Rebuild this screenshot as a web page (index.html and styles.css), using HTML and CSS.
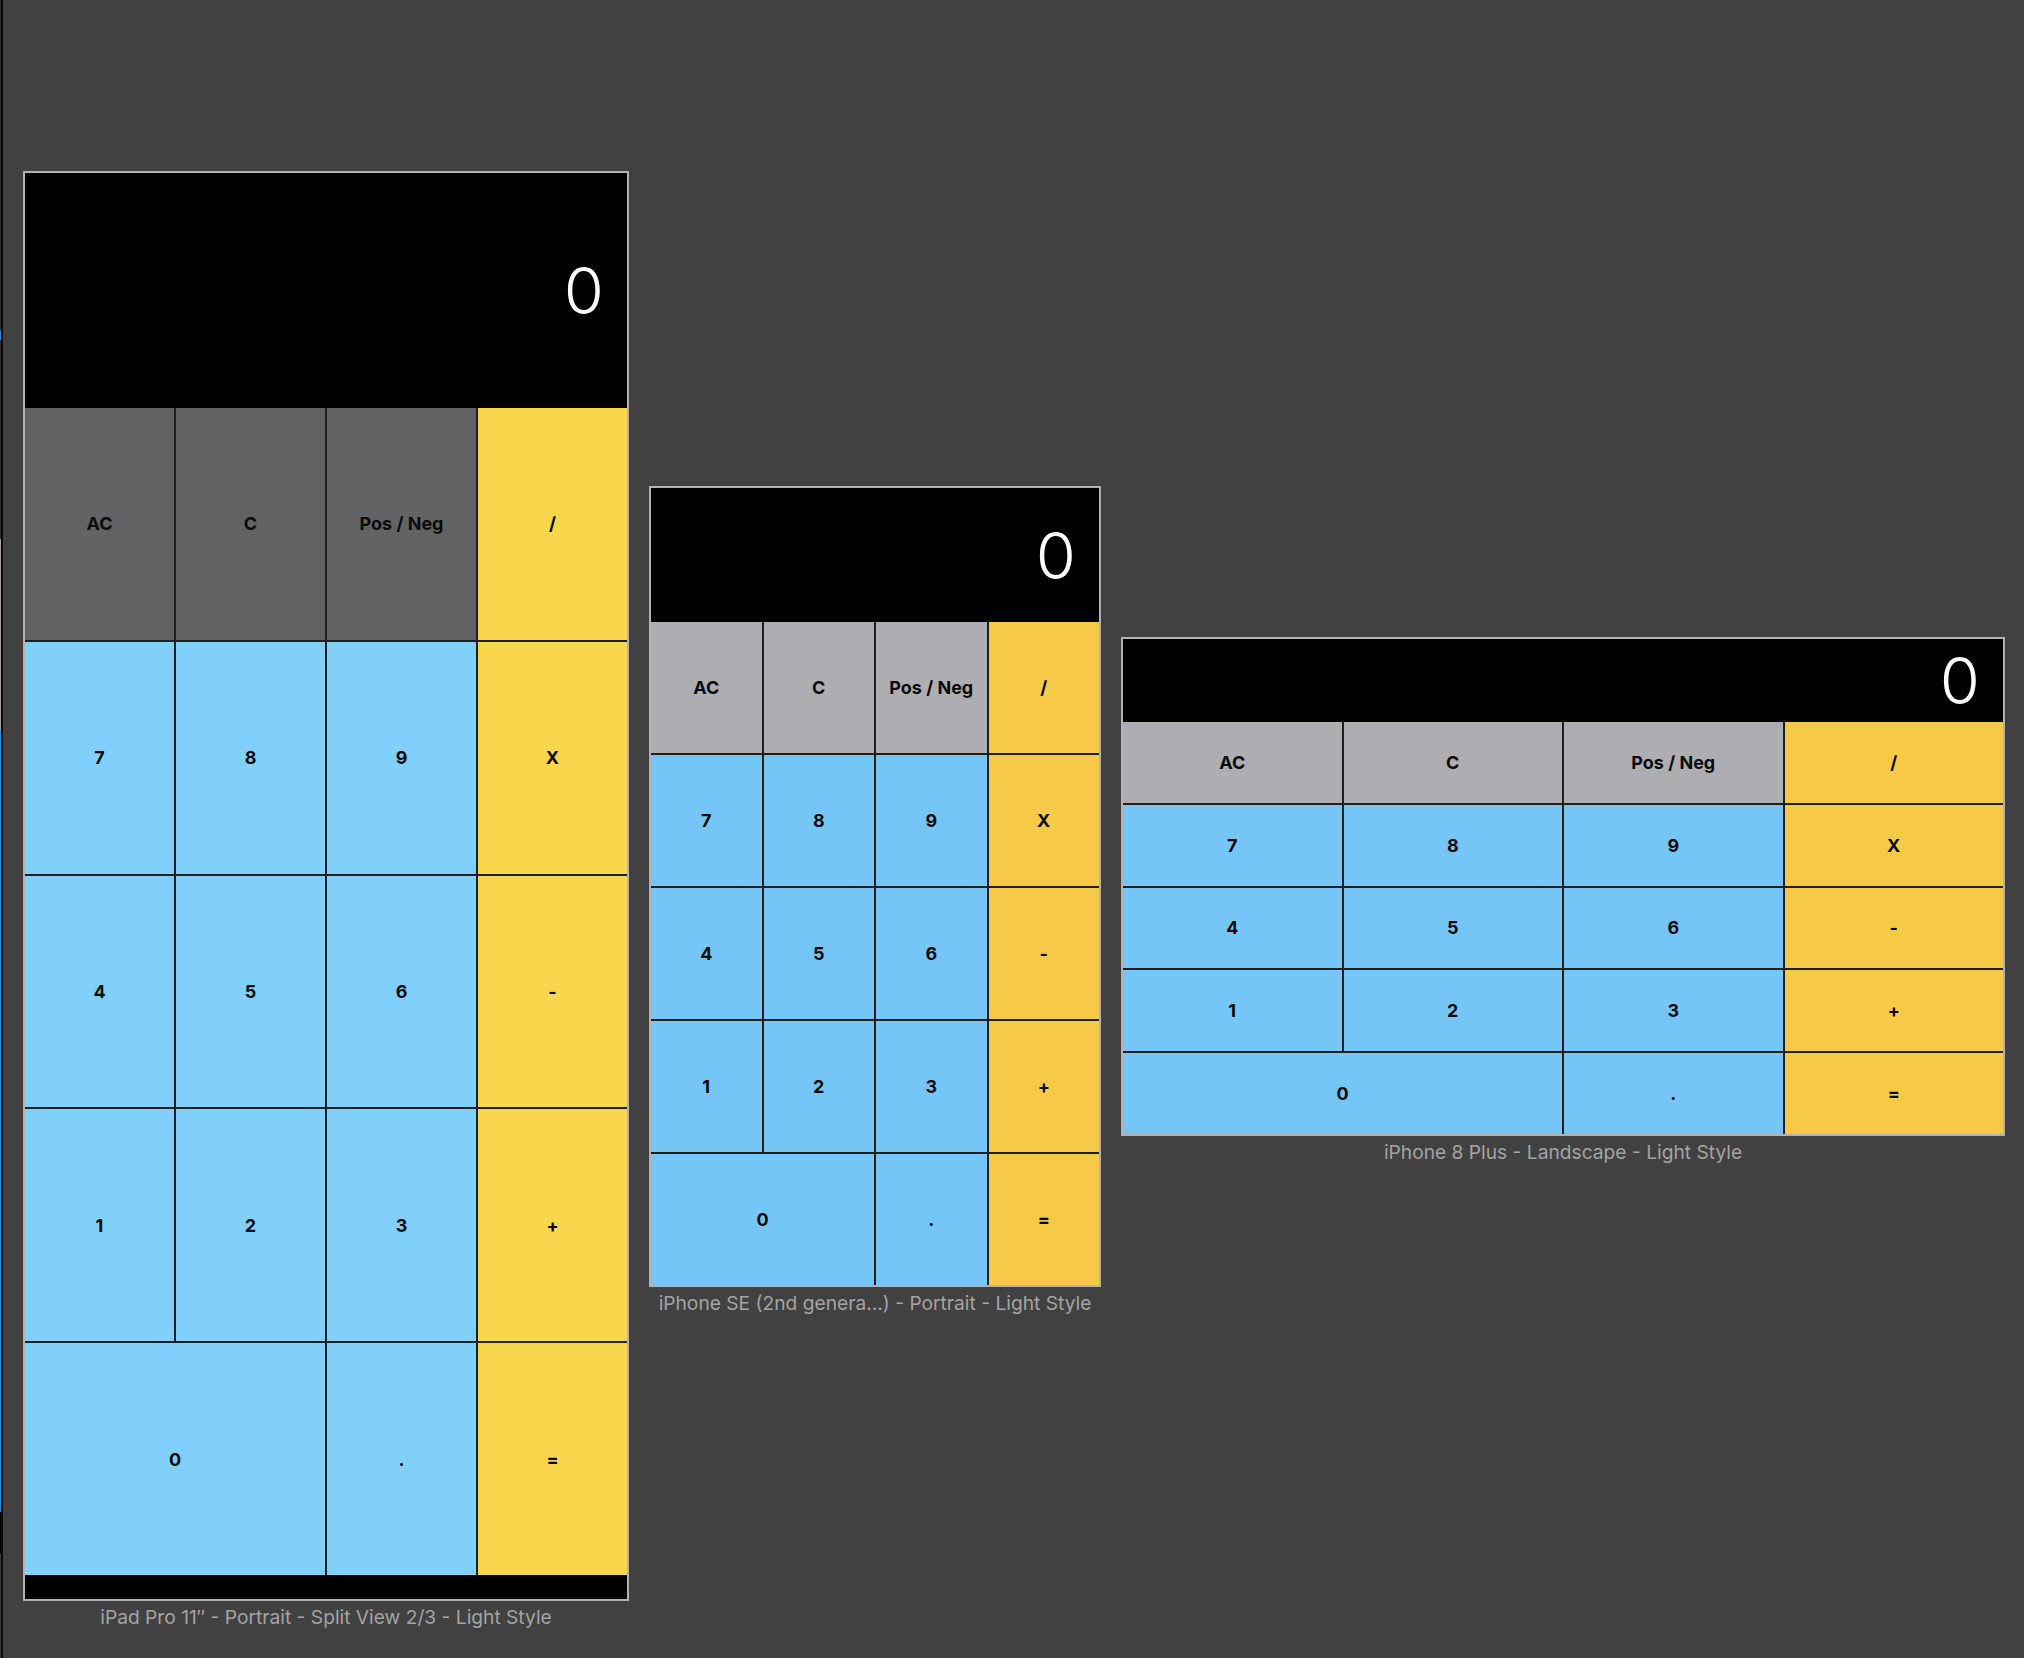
FILE: index.html
```html
<!DOCTYPE html>
<html lang="en">
<head>
<meta charset="utf-8">
<title>Calculator previews</title>
<link rel="stylesheet" href="styles.css">
</head>
<body>
<div class="canvas">
  <div class="edge"></div>
  <div class="rule"></div>
  <div class="previews">
    <section class="preview preview-ipad">
      <div class="frame">
        <div class="display"><span class="readout">0</span></div>
        <div class="keypad">
          <div class="key fn">AC</div>
          <div class="key fn">C</div>
          <div class="key fn">Pos / Neg</div>
          <div class="key op">/</div>
          <div class="key num">7</div>
          <div class="key num">8</div>
          <div class="key num">9</div>
          <div class="key op">X</div>
          <div class="key num">4</div>
          <div class="key num">5</div>
          <div class="key num">6</div>
          <div class="key op">-</div>
          <div class="key num">1</div>
          <div class="key num">2</div>
          <div class="key num">3</div>
          <div class="key op">+</div>
          <div class="key num zero">0</div>
          <div class="key num">.</div>
          <div class="key op">=</div>
        </div>
        <div class="home-bar"></div>
      </div>
      <p class="caption">iPad Pro 11″ - Portrait - Split View 2/3 - Light Style</p>
    </section>

    <section class="preview preview-se">
      <div class="frame">
        <div class="display"><span class="readout">0</span></div>
        <div class="keypad">
          <div class="key fn">AC</div>
          <div class="key fn">C</div>
          <div class="key fn">Pos / Neg</div>
          <div class="key op">/</div>
          <div class="key num">7</div>
          <div class="key num">8</div>
          <div class="key num">9</div>
          <div class="key op">X</div>
          <div class="key num">4</div>
          <div class="key num">5</div>
          <div class="key num">6</div>
          <div class="key op">-</div>
          <div class="key num">1</div>
          <div class="key num">2</div>
          <div class="key num">3</div>
          <div class="key op">+</div>
          <div class="key num zero">0</div>
          <div class="key num">.</div>
          <div class="key op">=</div>
        </div>
      </div>
      <p class="caption">iPhone SE (2nd genera...) - Portrait - Light Style</p>
    </section>

    <section class="preview preview-land">
      <div class="frame">
        <div class="display"><span class="readout">0</span></div>
        <div class="keypad">
          <div class="key fn">AC</div>
          <div class="key fn">C</div>
          <div class="key fn">Pos / Neg</div>
          <div class="key op">/</div>
          <div class="key num">7</div>
          <div class="key num">8</div>
          <div class="key num">9</div>
          <div class="key op">X</div>
          <div class="key num">4</div>
          <div class="key num">5</div>
          <div class="key num">6</div>
          <div class="key op">-</div>
          <div class="key num">1</div>
          <div class="key num">2</div>
          <div class="key num">3</div>
          <div class="key op">+</div>
          <div class="key num zero">0</div>
          <div class="key num">.</div>
          <div class="key op">=</div>
        </div>
      </div>
      <p class="caption">iPhone 8 Plus - Landscape - Light Style</p>
    </section>
  </div>
</div>
</body>
</html>
```

FILE: styles.css
```css
* { box-sizing: border-box; }

html, body {
  margin: 0;
  padding: 0;
  background: #414141;
}

body {
  width: 2024px;
  height: 1658px;
  overflow: hidden;
  font-family: Inter, "Noto Sans", "Liberation Sans", sans-serif;
}

.canvas {
  display: flex;
  height: 1658px;
}

.edge {
  width: 1px;
  flex: none;
  background: linear-gradient(to bottom,
    #2c2c2c 0, #2c2c2c 330px,
    #1f8fd5 330px, #1f8fd5 340px,
    #2c2c2c 340px, #2c2c2c 539px,
    #a39d96 539px, #a39d96 730px,
    #1e93d8 730px, #1e93d8 1512px,
    #000 1512px, #000 1554px,
    #3a3a3a 1554px);
}

.rule {
  width: 2px;
  flex: none;
  background: #0b0b0b;
}

.previews {
  display: flex;
  align-items: flex-start;
  gap: 20px;
  padding-left: 20px;
}

.preview {
  display: flex;
  flex-direction: column;
  align-items: center;
}

.preview-ipad { margin-top: 171px; }
.preview-se { margin-top: 486px; }
.preview-land { margin-top: 637px; }

.frame {
  border: 2px solid #b2b2b2;
  background: #000;
  display: flex;
  flex-direction: column;
}

.preview-ipad .frame { width: 606px; }
.preview-se .frame { width: 452px; }
.preview-land .frame { width: 884px; }

.display {
  display: flex;
  align-items: center;
  justify-content: flex-end;
  padding-right: 23px;
  background: #000;
}

.preview-ipad .display { height: 235px; }
.preview-se .display { height: 134px; }
.preview-land .display { height: 83px; }

.readout {
  color: #fff;
  font-family: Inter, "Noto Sans", sans-serif;
  font-weight: 300;
  font-size: 65px;
  line-height: 1;
}

.keypad {
  display: grid;
  grid-template-columns: repeat(4, 1fr);
  grid-template-rows: repeat(5, 1fr);
  gap: 2px;
  background: #1f1f1f;
}

.preview-ipad .keypad { height: 1167px; }
.preview-se .keypad { height: 663px; }
.preview-land .keypad { height: 412px; }

.key {
  display: flex;
  align-items: center;
  justify-content: center;
  font-size: 18px;
  font-weight: 700;
  color: #0a0a0a;
}

.zero { grid-column: span 2; }

.preview-ipad .fn { background: #636366; }
.preview-ipad .num { background: #80d0fb; }
.preview-ipad .op { background: #f9d64b; }

.preview-se .fn,
.preview-land .fn { background: #aeaeb2; }
.preview-se .num,
.preview-land .num { background: #75c6f6; }
.preview-se .op,
.preview-land .op { background: #f6ca47; }

.home-bar {
  height: 24px;
  background: #000;
}

.caption {
  margin: 5px 0 0;
  font-size: 19.2px;
  line-height: 23px;
  color: #a4a4a4;
  white-space: nowrap;
}
```
